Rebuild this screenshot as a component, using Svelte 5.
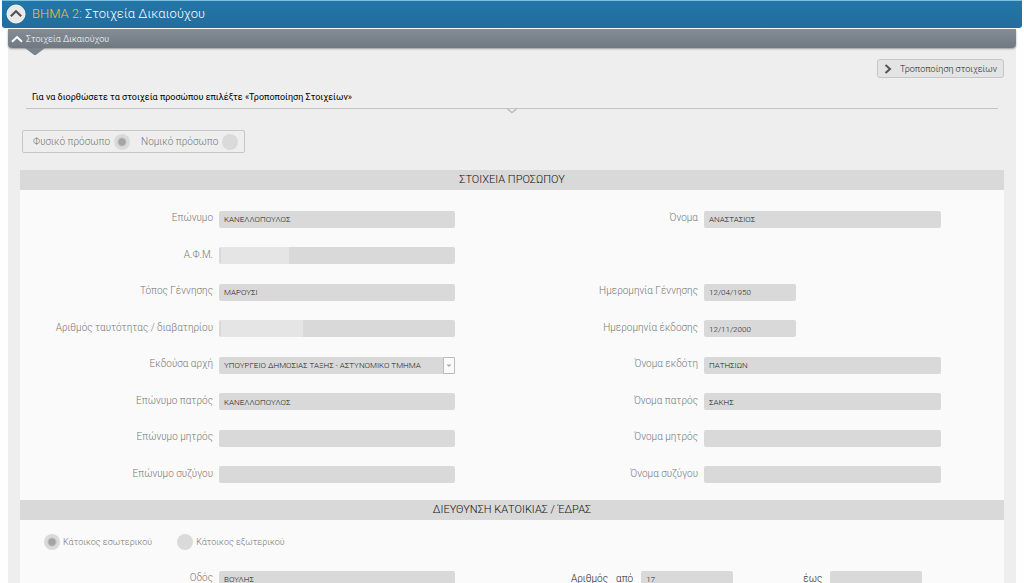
<script>
  const rows = [
    [
      { id: 'surname', label: 'Επώνυμο', value: 'ΚΑΝΕΛΛΟΠΟΥΛΟΣ' },
      { id: 'name', label: 'Όνομα', value: 'ΑΝΑΣΤΑΣΙΟΣ' }
    ],
    [{ id: 'afm', label: 'Α.Φ.Μ.', value: '', kind: 'masked' }, null],
    [
      { id: 'birthplace', label: 'Τόπος Γέννησης', value: 'ΜΑΡΟΥΣΙ' },
      { id: 'birthdate', label: 'Ημερομηνία Γέννησης', value: '12/04/1950', kind: 'date' }
    ],
    [
      { id: 'idnumber', label: 'Αριθμός ταυτότητας / διαβατηρίου', value: '', kind: 'masked wide' },
      { id: 'issuedate', label: 'Ημερομηνία έκδοσης', value: '12/11/2000', kind: 'date' }
    ],
    [
      { id: 'authority', label: 'Εκδούσα αρχή', value: 'ΥΠΟΥΡΓΕΙΟ ΔΗΜΟΣΙΑΣ ΤΑΞΗΣ - ΑΣΤΥΝΟΜΙΚΟ ΤΜΗΜΑ', kind: 'select' },
      { id: 'issuer', label: 'Όνομα εκδότη', value: 'ΠΑΤΗΣΙΩΝ' }
    ],
    [
      { id: 'fathersurname', label: 'Επώνυμο πατρός', value: 'ΚΑΝΕΛΛΟΠΟΥΛΟΣ' },
      { id: 'fathername', label: 'Όνομα πατρός', value: 'ΣΑΚΗΣ' }
    ],
    [
      { id: 'mothersurname', label: 'Επώνυμο μητρός', value: '' },
      { id: 'mothername', label: 'Όνομα μητρός', value: '' }
    ],
    [
      { id: 'spousesurname', label: 'Επώνυμο συζύγου', value: '' },
      { id: 'spousename', label: 'Όνομα συζύγου', value: '' }
    ]
  ];
</script>

<main>
  <header class="step">
    <button class="round" aria-label="Σύμπτυξη βήματος">
      <svg viewBox="0 0 20 20" width="20" height="20">
        <circle cx="10" cy="10" r="9" fill="#e9e9e9" stroke="#f8f8f8" />
        <path d="M4.800 12.200 10 7.200l5.200 5" fill="none" stroke="#555" stroke-width="2.200" />
      </svg>
    </button>
    <h1><span>ΒΗΜΑ 2:</span> Στοιχεία Δικαιούχου</h1>
  </header>

  <div class="panel">
    <button class="bar">
      <svg viewBox="0 0 12 8" width="12" height="8"><path d="M1 6.700 6 2l5 4.700" fill="none" stroke="#fff" stroke-width="2" /></svg>
      Στοιχεία Δικαιούχου
      <svg class="pointer" viewBox="0 0 20 8" width="20" height="8"><path d="M0 0h20l-8.500 6.500q-1.500 1-3 0Z" fill="#7a828b" /></svg>
    </button>

    <div class="actions">
      <button class="modify">
        <svg viewBox="0 0 8 10" width="8" height="10"><path d="M1.500 1 6 5 1.500 9" fill="none" stroke="#555" stroke-width="2" /></svg>
        Τροποποίηση στοιχείων
      </button>
    </div>

    <div class="intro">
      <p>Για να διορθώσετε τα στοιχεία προσώπου επιλέξτε «Τροποποίηση Στοιχείων»</p>
      <div class="rule">
        <svg viewBox="0 0 10 6" width="10" height="6"><path d="M.5 0 5 3.500 9.500 0" fill="#eee" stroke="#bbb" stroke-width="1.500" /></svg>
      </div>
    </div>

    <div class="type">
      <label>Φυσικό πρόσωπο <input type="radio" name="ptype" checked disabled /></label>
      <label>Νομικό πρόσωπο <input type="radio" name="ptype" disabled /></label>
    </div>

    <section>
      <h2>ΣΤΟΙΧΕΙΑ ΠΡΟΣΩΠΟΥ</h2>
      <div class="person">
        {#each rows as row}
          <div class="line">
            {#each row as f}
              {#if f}
                <label for={f.id}>{f.label}</label>
                {#if f.kind === 'select'}
                  <div class="pick">
                    <select id={f.id} disabled><option>{f.value}</option></select>
                    <svg viewBox="0 0 12 17" width="12" height="17"><path d="M.5.5h11v16H.5Z" fill="#fafafa" stroke="#bbb" /><path d="M3.500 7.500h5L6 10Z" fill="#aaa" /></svg>
                  </div>
                {:else}
                  <input id={f.id} class={f.kind ?? ''} type="text" value={f.value} disabled />
                {/if}
              {/if}
            {/each}
          </div>
        {/each}
      </div>
    </section>

    <section>
      <h2>ΔΙΕΥΘΥΝΣΗ ΚΑΤΟΙΚΙΑΣ / ΈΔΡΑΣ</h2>
      <div class="residence">
        <label><input type="radio" name="residence" checked disabled />Κάτοικος εσωτερικού</label>
        <label><input type="radio" name="residence" disabled />Κάτοικος εξωτερικού</label>
      </div>
      <div class="line address">
        <label for="street">Οδός</label>
        <input id="street" type="text" value="ΒΟΥΛΗΣ" disabled />
        <div class="numbers">
          <span>Αριθμός</span>
          <label for="from">από</label>
          <input id="from" type="text" value="17" disabled />
          <label class="to" for="to">έως</label>
          <input id="to" type="text" disabled />
        </div>
      </div>
    </section>
  </div>
</main>

<style>
  :global(html) { scrollbar-width: none; }
  :global(body) { background: #fefefe; }
  main {
    font: 300 10px/16px Roboto, "Noto Sans", sans-serif;
    color: #777;
    padding: 0 2px;
  }
  * { box-sizing: border-box; }
  button, input, select { font: inherit; margin: 0; }
  svg { display: block; flex: none; }
  h1, h2, p { margin: 0; font-weight: 300; }

  .step {
    display: flex;
    align-items: center;
    gap: 6px;
    height: 28px;
    padding: 0 4px 2px;
    border-top: 1px solid #7fc0dc;
    border-radius: 0 0 3px 3px;
    background: linear-gradient(#2277a8, #226c9f);
  }
  .round { padding: 0; border: 0; background: none; }
  h1 { font-size: 13px; line-height: 20px; color: #fff; }
  h1 span { color: #f8bd38; }

  .panel {
    margin: 1px 6px 0;
    background: #eee;
  }
  .bar {
    position: relative;
    display: flex;
    align-items: center;
    gap: 3px;
    width: 100%;
    height: 19px;
    padding: 0 3px;
    border: 0;
    border-radius: 0 0 4px 4px;
    background: linear-gradient(#848d96, #707981);
    box-shadow: 0 1px 2px #9a9a9a;
    color: #fff;
    font-size: 9px;
  }
  .pointer { position: absolute; left: 17px; top: 100%; }

  .actions { display: flex; justify-content: flex-end; padding: 11px 12px 0; }
  .modify {
    display: flex;
    align-items: center;
    gap: 8px;
    height: 19px;
    padding: 0 6px;
    border: 1px solid #c6c6c6;
    border-radius: 3px;
    background: #e4e4e4;
    color: #222;
    font-size: 9px;
  }
  .intro { padding: 10px 18px 0; }
  .intro p {
    padding: 0 6px;
    line-height: 18px;
    color: #000;
    font-size: 9px;
    font-weight: 400;
  }
  .rule {
    display: flex;
    justify-content: center;
    height: 6px;
    margin-top: 2px;
    border-top: 1px solid #c4c4c4;
  }

  .type {
    display: inline-flex;
    gap: 11px;
    height: 23px;
    margin: 16px 14px 17px;
    padding: 0 6px 0 10px;
    border: 1px solid #c6c6c6;
    border-radius: 2px;
    vertical-align: top;
  }
  .type label { display: flex; align-items: center; gap: 4px; }
  input[type="radio"] {
    appearance: none;
    width: 16px;
    height: 16px;
    border-radius: 50%;
    background: #dadada;
  }
  input[type="radio"]:checked { background: radial-gradient(circle, #a4a4a4 3px, #dadada 5px); }

  section {
    margin: 0 12px;
    background: #fafafa;
  }
  h2 {
    background: #d9d9d9;
    color: #111;
    font-size: 11px;
    line-height: 20px;
    text-align: center;
  }
  .person {
    display: grid;
    grid-auto-rows: 1fr;
    min-height: 310px;
    padding: 11px 0 7px;
  }
  .line {
    display: grid;
    grid-template-columns: 199fr 236fr 249fr 237fr 63fr;
    align-items: center;
  }
  .line > label { padding: 0 6px 2px; text-align: right; }
  input[type="text"], select {
    width: 100%;
    height: 17px;
    padding: 1px 5px 0;
    border: 0;
    border-radius: 2px;
    background: #d9d9d9;
    color: #222;
    font-size: 8px;
    opacity: 1;
  }
  input.date { width: 39%; }
  input.masked { background: linear-gradient(90deg, #d9d9d9 2px, #e5e5e5 2px 70px, #d9d9d9 70px); }
  input.wide { background: linear-gradient(90deg, #d9d9d9 2px, #e5e5e5 2px 84px, #d9d9d9 84px); }
  .pick { position: relative; }
  .pick svg { position: absolute; right: 0; top: 0; pointer-events: none; }
  select { display: block; appearance: none; }

  .residence {
    display: flex;
    gap: 25px;
    padding: 14px 24px 0;
    font-size: 9px;
  }
  .residence label { display: flex; align-items: center; gap: 3px; }
  .address { padding: 20px 0; }
  .numbers {
    grid-column: 3 / -1;
    display: flex;
    align-items: center;
    gap: 8px;
    padding-left: 116px;
    color: #222;
  }
  .numbers input { width: 92px; }
  .numbers .to { margin-left: 62px; }
</style>
